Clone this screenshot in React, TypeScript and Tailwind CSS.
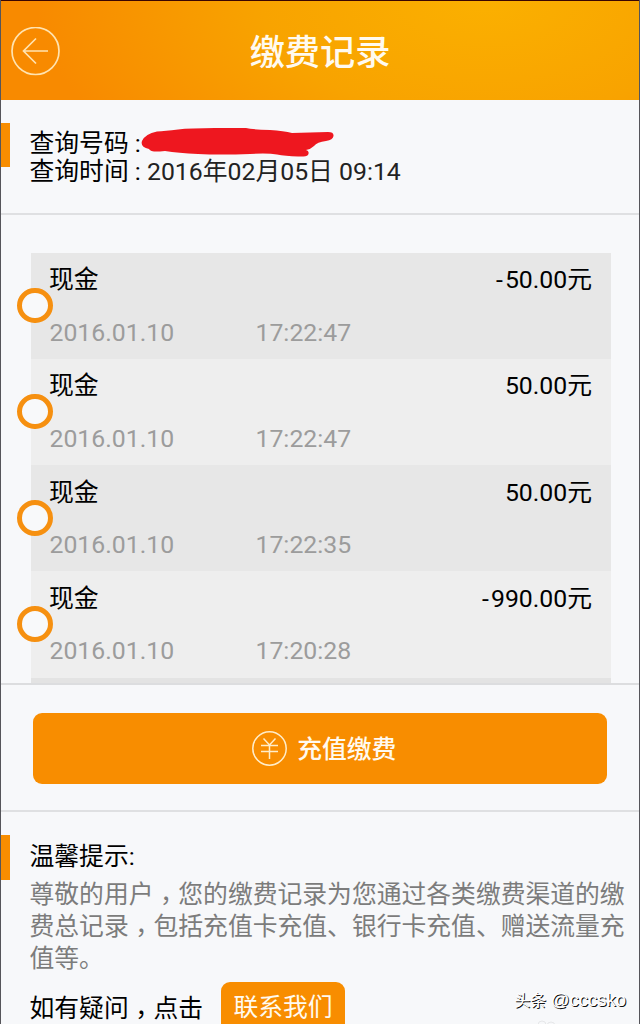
import clsx from 'clsx';

interface PaymentRecord {
  id: number;
  type: string;
  amount: string;
  date: string;
  time: string;
}

const records: PaymentRecord[] = [
  { id: 1, type: '现金', amount: '-50.00元', date: '2016.01.10', time: '17:22:47' },
  { id: 2, type: '现金', amount: '50.00元', date: '2016.01.10', time: '17:22:47' },
  { id: 3, type: '现金', amount: '50.00元', date: '2016.01.10', time: '17:22:35' },
  { id: 4, type: '现金', amount: '-990.00元', date: '2016.01.10', time: '17:20:28' },
];

// The TC face centres the comma in its cell, so it only has to be lowered
function Comma() {
  return <span className="relative top-[7px] font-['Noto_Sans_CJK_TC',sans-serif] leading-none">，</span>;
}

function Header() {
  return (
    <header className="flex h-[100px] shrink-0 items-center border-t border-[#3a0500] bg-[radial-gradient(ellipse_450px_230px_at_76%_0%,#fbb000_0%,#f8a300_50%,#f88a00_100%)] pt-[2px]">
      <button className="ml-[11px] w-[49px]" aria-label="返回">
        <svg width="49" height="49" viewBox="0 0 49 49" fill="none" stroke="#ffe3b0" strokeWidth="1.7">
          <circle cx="24.5" cy="24" r="23.5" />
          <path d="M37 24H13M25 11.500L12.500 24L25 36.500" />
        </svg>
      </button>
      <h1 className="mr-[60px] flex-1 pt-[2px] text-center text-[35.2px] font-medium leading-[48px] text-[#fffaf0]">
        缴费记录
      </h1>
    </header>
  );
}

function QueryInfo() {
  return (
    <section className="flex h-[115px] shrink-0 border-b-2 border-[#dfe0e2] pt-[23px]">
      <div className="h-[44px] w-[10px] bg-[#f88d00]" />
      <div className="ml-[19.500px] mt-[6.500px] leading-[28.5px]">
        <div className="flex h-[28.5px]">
          <span className="whitespace-pre text-black">查询号码 :</span>
          {/* Number is scribbled out */}
          <svg className="-mt-[2.500px] shrink-0" width="193" height="30" viewBox="141 127 193 30" fill="#ee171f">
            <path d="M142 141Q145 134 157 131.500Q165 131 178 129.500Q190 128 215 128L246 128Q252 129.500 270 130Q284 131 292 133L328 132Q334 132 333.500 136Q333 140 326 141Q317 142 314 146Q311 149 306 150Q310 151 308 155Q306 157 298 156.500Q285 156 277 154.500Q268 153 250 154Q220 155 198 154Q178 153 165 151L160 151.500Q150 152 149 149Q140 147 142 141Z" />
          </svg>
        </div>
        <div className="whitespace-pre text-[#222]">
          <span className="text-black">查询时间 : </span>2016年02月05日 09:14
        </div>
      </div>
    </section>
  );
}

function RecordRow({ record, shaded }: { record: PaymentRecord; shaded: boolean }) {
  const negative = record.amount.startsWith('-');

  return (
    <li
      className={clsx(
        'relative flex h-[106.300px] shrink-0 flex-col pl-[18.500px] pr-[18.500px] pt-[10.500px]',
        shaded ? 'bg-[#e7e7e7]' : 'bg-[#eeeeee]',
      )}
    >
      {/* Timeline marker */}
      <span className="absolute -left-[14px] top-[35px] size-[35.500px] rounded-full border-[5px] border-[#f69010] bg-[#f8f9fa]" />
      <div className="flex justify-between leading-[34px] text-black">
        <span className="-ml-[0.500px]">{record.type}</span>
        <span>
          {negative && <span className="tracking-[2px]">-</span>}
          {negative ? record.amount.slice(1) : record.amount}
        </span>
      </div>
      <div className="mt-[18.500px] flex leading-[34px] text-[#9c9c9c]">
        <span className="w-[206px]">{record.date}</span>
        <span>{record.time}</span>
      </div>
    </li>
  );
}

function RecordList() {
  return (
    <section className="h-[470px] shrink-0 overflow-hidden border-b-2 border-[#dcdddf] pt-[37.500px]">
      <ul className="ml-[31px] mr-[29.500px] flex flex-col">
        {records.map((record, i) => (
          <RecordRow key={record.id} record={record} shaded={i % 2 === 0} />
        ))}
        <li className="h-5 bg-[#e3e3e3]" />
      </ul>
    </section>
  );
}

function RechargeButton() {
  return (
    <section className="h-[127px] shrink-0 border-b-2 border-[#dfe0e2] pl-[32.500px] pr-[33px] pt-[28px]">
      <button className="flex h-[71px] w-full items-center justify-center rounded-[9px] bg-[#f88d00] pl-[9px] font-medium text-[#fffaf0]">
        <svg className="mr-[10px]" width="35" height="35" viewBox="0 0 35 35" fill="none" stroke="#ffedc9" strokeWidth="1.5">
          <circle cx="17.500" cy="17.500" r="16.700" />
          <path d="M11.500 7.500L17.500 14L23.500 7.500M9 14.500H26M9 20.500H26M17.500 14V28" />
        </svg>
        <span className="pt-[2px]">充值缴费</span>
      </button>
    </section>
  );
}

function Tips() {
  return (
    <section className="flex flex-1 overflow-hidden pt-[23px]">
      <div className="h-[45px] w-[10px] shrink-0 bg-[#f88d00]" />
      <div className="ml-[19.500px] flex-1">
        <h2 className="mt-[3.500px] leading-[36px] text-black">温馨提示:</h2>
        <p className="mt-[4.500px] w-[600px] leading-[32px] text-[#7c7c7c]">
          尊敬的用户<Comma />您的缴费记录为您通过各类缴费渠道的缴
          <br />
          费总记录<Comma />包括充值卡充值、银行卡充值、赠送流量充
          <br />
          值等。
        </p>
        <div className="mt-[7px] flex">
          <span className="w-[191.500px] pt-[2px] leading-[50px] text-black">
            如有疑问<Comma />点击
          </span>
          <button className="h-[52px] w-[124px] rounded-[9px] bg-[#f88d00] leading-[50px] text-[#fffaf0]">联系我们</button>
        </div>
      </div>
    </section>
  );
}

export default function App() {
  return (
    <div className="relative flex h-[1024px] w-[640px] flex-col overflow-hidden bg-[#f7f8fa] font-[Roboto,'Noto_Sans_CJK_SC',sans-serif] text-[24.800px]">
      <Header />
      <QueryInfo />
      <RecordList />
      <RechargeButton />
      <Tips />
      {/* Screen edges */}
      <div className="absolute inset-y-0 left-0 w-px bg-[#55555a]" />
      <div className="absolute inset-y-0 right-0 w-px bg-[#55555a]" />
      <div className="absolute right-[14px] top-[988px] whitespace-pre font-['Liberation_Sans','Noto_Sans_CJK_SC',sans-serif] text-[16px] leading-[24px] text-white [text-shadow:1px_1px_0_#111]">
        头条 <span className="text-[18.500px]">@cccsko</span>
      </div>
      <svg className="absolute bottom-0 left-[537px]" width="20" height="4" viewBox="0 0 20 4" fill="none" stroke="#e6e7e9">
        <circle cx="5" cy="5" r="4" />
        <circle cx="14" cy="6" r="4" />
      </svg>
    </div>
  );
}
